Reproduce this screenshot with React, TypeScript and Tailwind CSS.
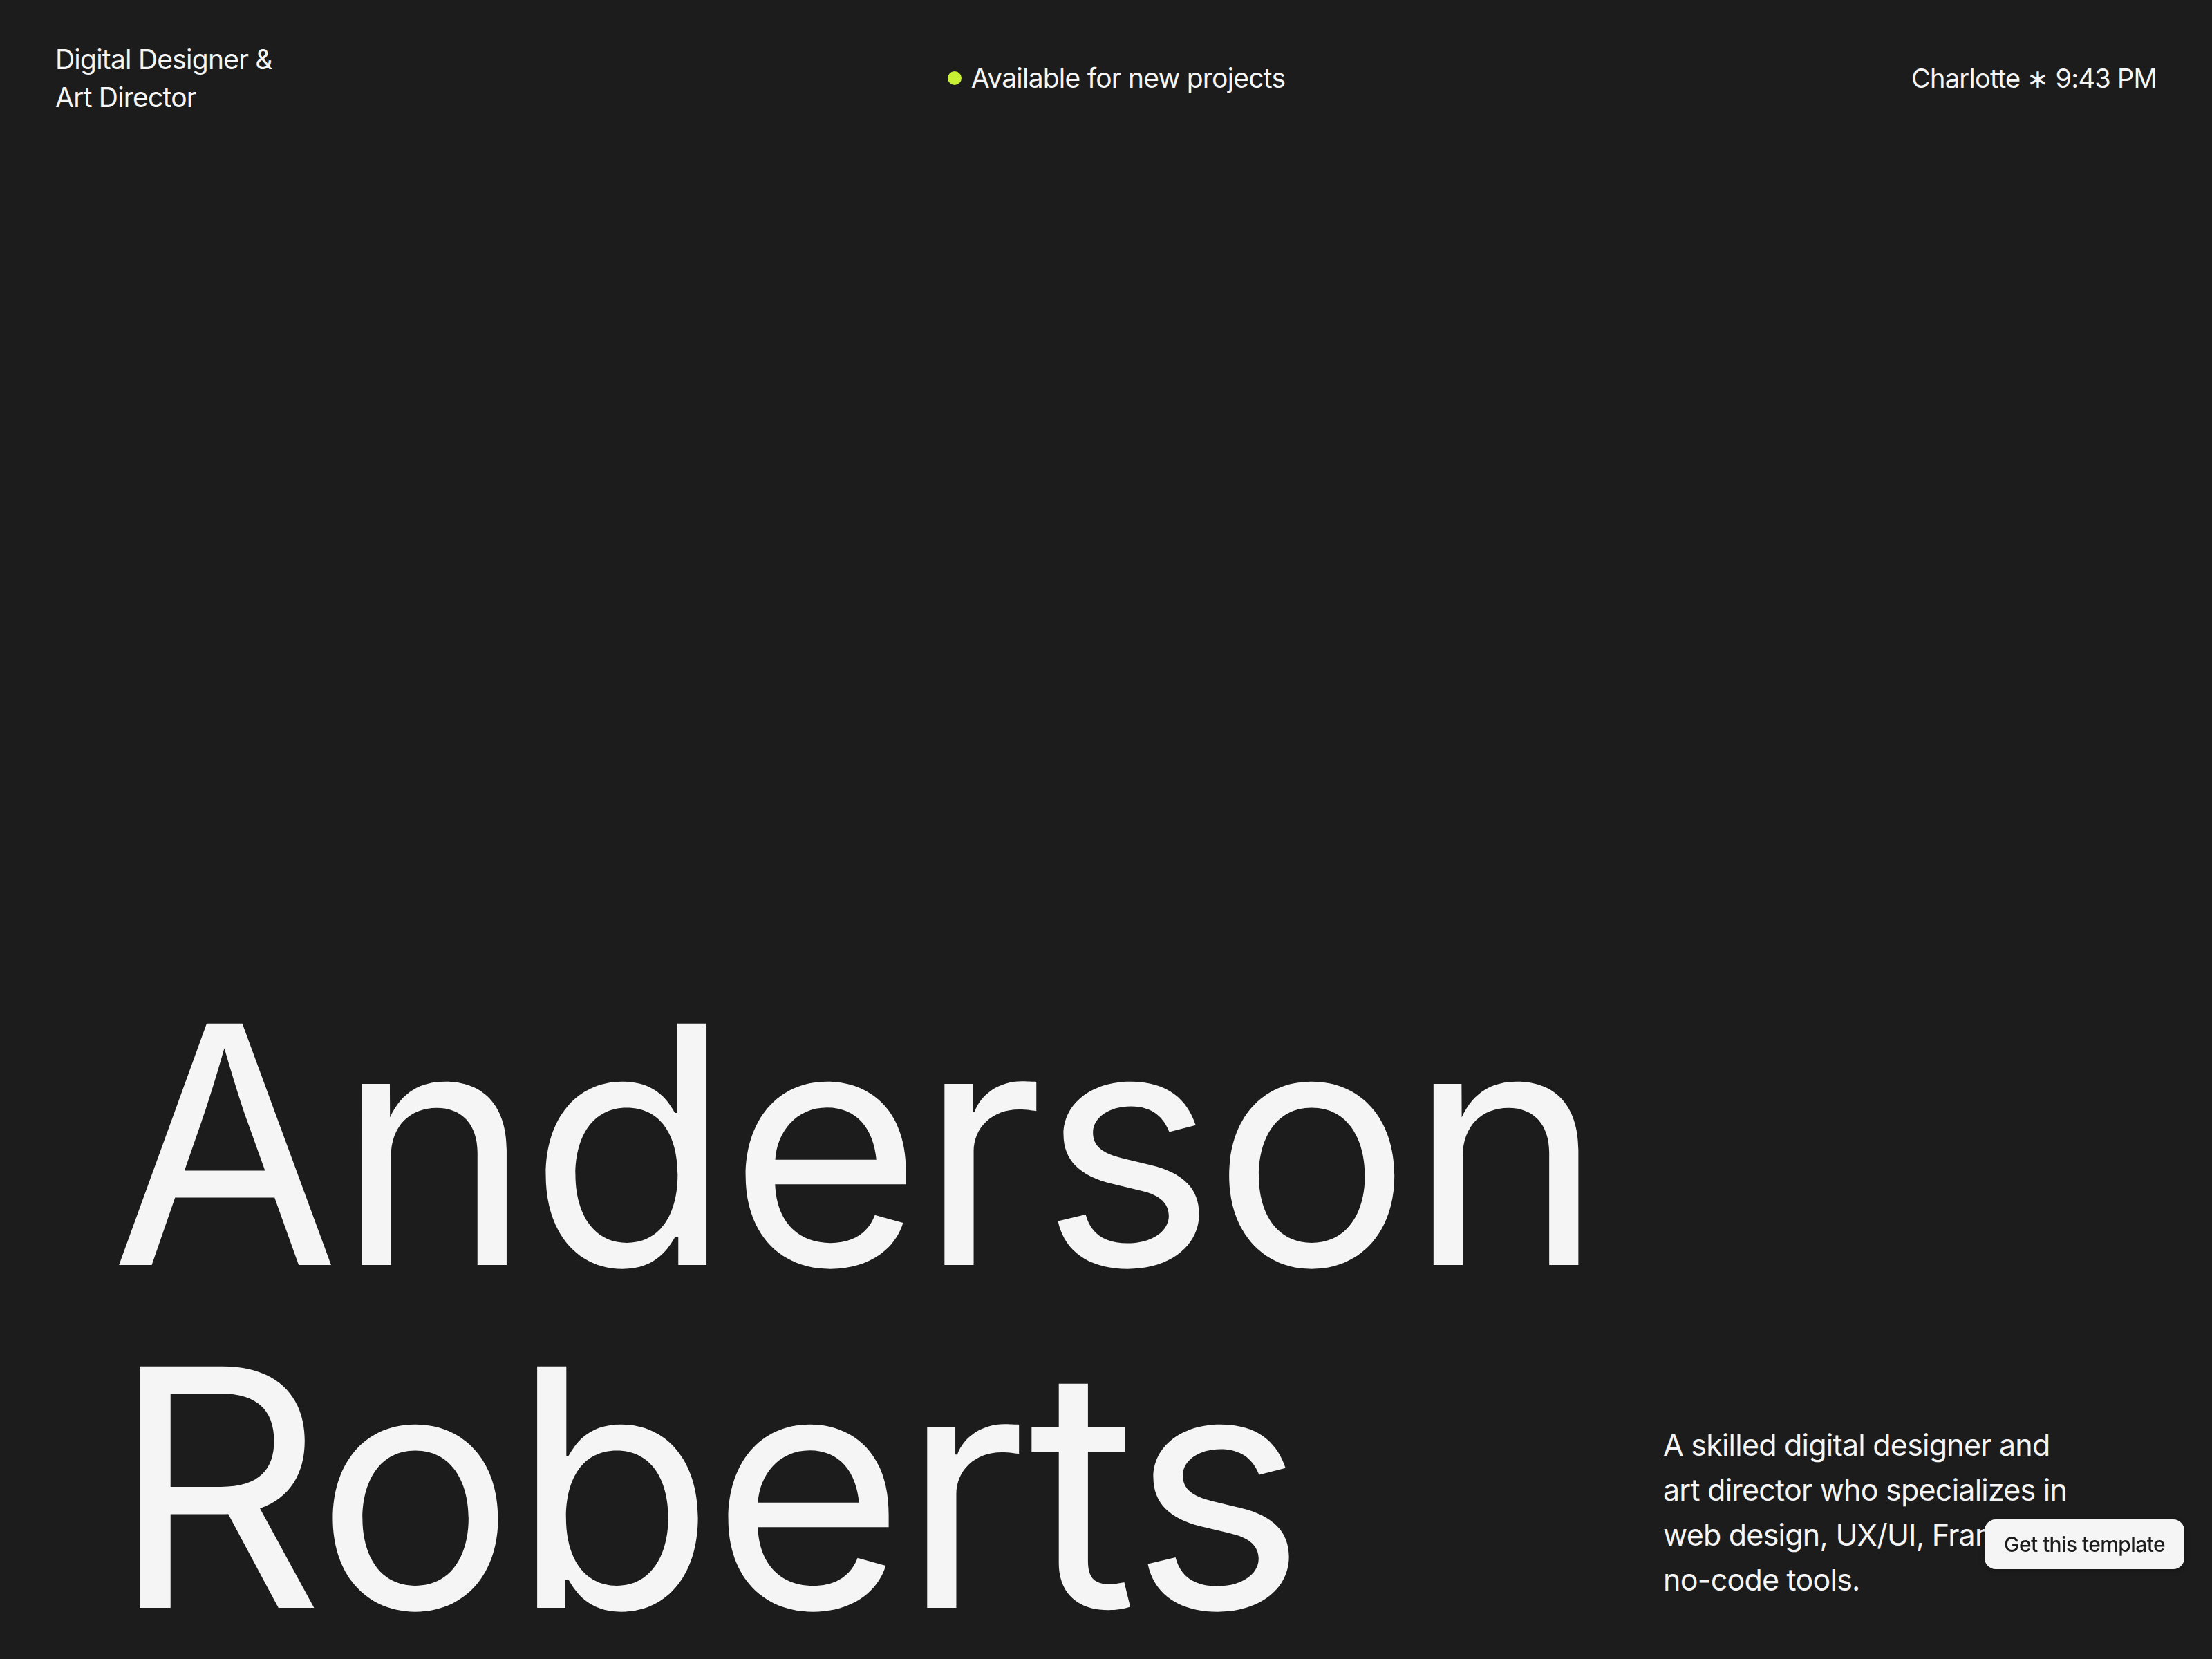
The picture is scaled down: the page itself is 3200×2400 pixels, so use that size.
export default function App() {
  return (
    <div className="min-h-screen w-full bg-[#1c1c1c] text-[#f5f5f5] font-['Inter',sans-serif] flex flex-col justify-between overflow-hidden">
      <header className="grid grid-cols-[1fr_auto_1fr] items-center px-[80px] pt-[58px]">
        <div className="text-[39px] leading-[55px] tracking-[-0.02em]">
          <p>Digital Designer &amp;</p>
          <p>Art Director</p>
        </div>
        <div className="flex items-center gap-[14px] text-[39px] tracking-[-0.02em] ml-[30px]">
          <span className="w-[20px] h-[20px] rounded-full bg-[#c8f135]" />
          <span>Available for new projects</span>
        </div>
        <div className="justify-self-end text-[38px] tracking-[-0.02em]">Charlotte ∗ 9:43 PM</div>
      </header>

      <section className="flex items-end justify-between pl-[160px] pr-[174px]">
        <h1 className="text-[480px] leading-[496px] tracking-[-0.01em] font-normal">
          Anderson
          <br />
          Roberts
        </h1>
        <p className="w-[620px] whitespace-nowrap text-[43px] leading-[65px] tracking-[-0.018em] pb-[82px]">
          A skilled digital designer and
          <br />
          art director who specializes in
          <br />
          web design, UX/UI, Framer, and
          <br />
          no-code tools.
        </p>
      </section>

      <a
        href="#"
        className="fixed right-[40px] bottom-[130px] h-[72px] px-[28px] flex items-center rounded-[16px] bg-[#f5f5f5] text-[#1c1c1c] text-[30px] font-medium tracking-[-0.02em] shadow-[0_2px_8px_rgba(0,0,0,0.25)]"
      >
        Get this template
      </a>
    </div>
  );
}
